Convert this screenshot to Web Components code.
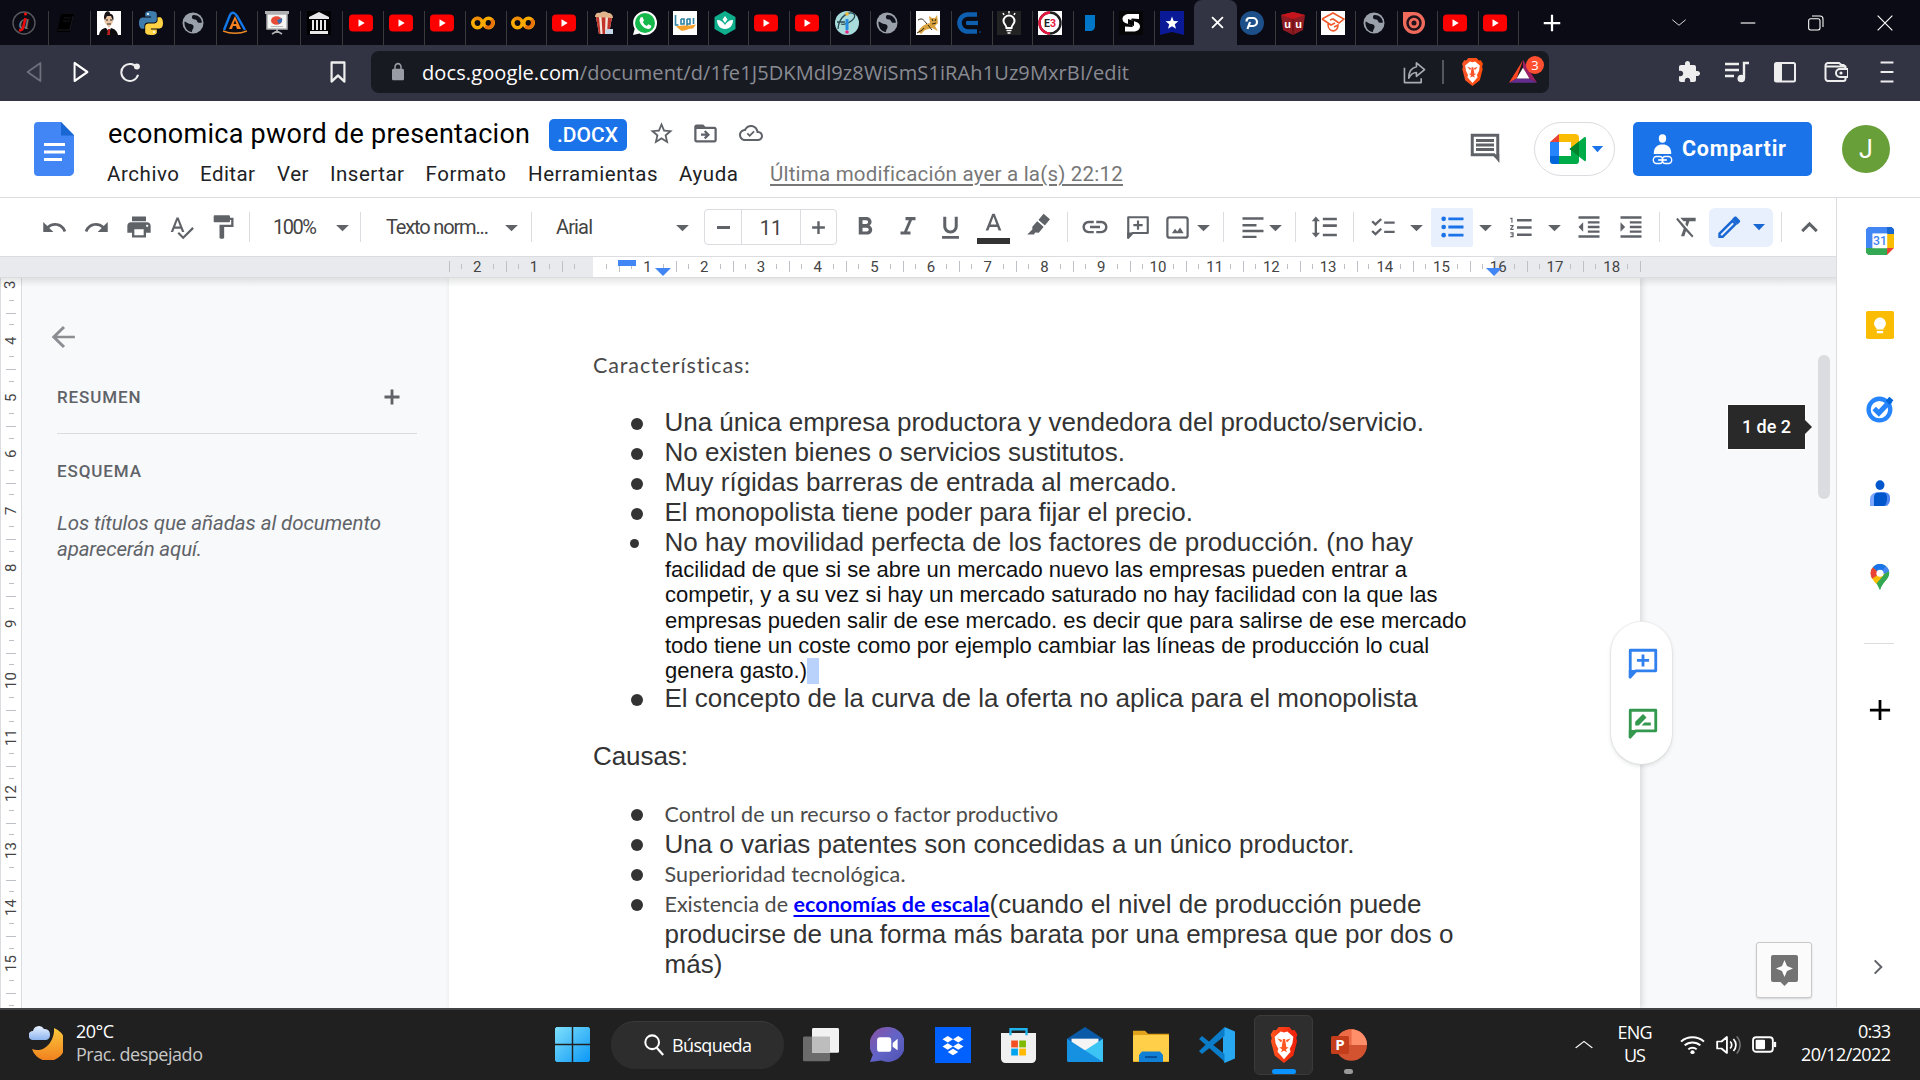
<!DOCTYPE html>
<html lang="es">
<head>
<meta charset="utf-8">
<title>economica pword de presentacion</title>
<style>
html,body{margin:0;width:1920px;height:1080px;overflow:hidden;background:#f8f9fa}
body{font-family:Roboto,"Liberation Sans",sans-serif}
</style>
</head>
<body>
<desktop-screen></desktop-screen>
<script>
const G='#5f6368';
const p=d=>`<path fill="currentColor" d="${d}"/>`;
const globe='<ellipse cx="12" cy="12" rx="10.500" ry="10.500" fill="#9aa0a9"/><path d="M3.500 10.500c2 0 3 2.500 5.500 2.500s4 1.500 3.500 3.500-1.500 2-1.500 4.500C6 20.500 3 16 3.500 10.500zM12 4c-1.500 1.500-1.500 3 0 4s3.500 0 4 2 2.500 2 5 1.500C20.500 7 17 3.500 12 4z" fill="#10121b"/>';
const yt='<rect y="3.5" width="24" height="17" rx="4" fill="#f00"/><path d="M9.500 8.300v7.400l6.200-3.700z" fill="#fff"/>';
const colab='<circle cx="6.500" cy="12" r="4.700" fill="none" stroke="#f9ab00" stroke-width="3.600"/><circle cx="17.500" cy="12" r="4.700" fill="none" stroke="#f9ab00" stroke-width="3.600"/><path d="M14.200 15.300a4.700 4.700 0 006.600-6.600" fill="none" stroke="#e8710a" stroke-width="3.600"/><path d="M3.200 8.700a4.700 4.700 0 016.600 0" fill="none" stroke="#e8710a" stroke-width="3.600" opacity=".55"/>';
const lion=(c,c2)=>`<defs><linearGradient id="l" x2="1"><stop stop-color="${c}"/><stop offset="1" stop-color="${c2}"/></linearGradient></defs><path fill="url(#l)" d="M8 0h8l2 2.200 2-.2 2 3-.8 2.500.6 2-2.800 9.500L12 24l-7-5L2.200 9.500l.6-2L2 5l2-3 2 .2z"/><path fill="#fff" d="M12 3.600l2.500-.6L19 6.500l-.7 4.500-2 3.500.6 2L12 21.500 7.100 16.500l.6-2-2-3.500L5 6.500 9.500 3z"/><path fill="${c}" d="M7 7.600l3.600 1-.8 1.800zM17 7.600l-3.600 1 .8 1.800zM11.200 8h1.600l1 5.500h1.700l-2.200 1.600 1.200 1.700-2.500-1-2.500 1 1.200-1.700-2.200-1.600h1.700z"/>`;
const ICONS={
 at:'<circle cx="12" cy="12" r="11" fill="none" stroke="#58585c" stroke-width="1.400"/><text x="12" y="18" text-anchor="middle" font-size="22" font-family="Liberation Serif" font-style="italic" fill="#77777a">a</text><path d="M13.500 7l-2.500 10c-.5 2-2 2.500-4 2" stroke="#f00b0b" stroke-width="2.600" fill="none"/><circle cx="13.500" cy="3" r="1.600" fill="#f00b0b"/>',
 book:'<path d="M6 3h13l-4 18H2z" fill="#000"/><path d="M9 7h7M8 10h7" stroke="#17171d"/><path d="M3 19h12l3-14" stroke="#1a1a20" fill="none"/>',
 man:'<rect width="24" height="24" fill="#fff"/><path d="M7 8c0-5 3-6 5-6l3 3 1 6-4 6-4-5z" fill="#e9c4a5"/><path d="M7 7c0-5 3-8 5.500-6l1 2c3 0 3.500 4 2.500 7l-2-5-4 0-2 4z" fill="#1b1416"/><path d="M9 9h2m2 0h2M10 13h4" stroke="#222"/><path d="M2 24c1-6 5-7 7-7l3 4 2-4c4 1 6 3 7 7z" fill="#0c0c0e"/><path d="M11 18h2v6h-3z" fill="#b51f22"/>',
 python:'<path fill="#3f7cac" d="M11.900 0C6 0 6.200 2.600 6.200 2.600v3h5.900v.9H3.800S0 6 0 12s3.400 5.800 3.400 5.800h2V15s-.1-3.400 3.400-3.400h5.700s3.300 0 3.300-3.200V3.200S18.300 0 11.900 0z"/><path fill="#ffd343" d="M12.100 24c5.900 0 5.700-2.600 5.700-2.600v-3h-5.900v-.9h8.300S24 18 24 12s-3.400-5.800-3.400-5.800h-2V9s.1 3.400-3.400 3.400H9.500s-3.300 0-3.300 3.200v5.200S5.700 24 12.100 24z"/><circle cx="9" cy="3" r="1.100" fill="#fff"/><circle cx="15" cy="21" r="1.100" fill="#fff"/>',
 globe, yt, colab,
 ark:'<path d="M1 19L7 4c2-4 5-2 7 1l8 14" fill="none" stroke="#1578e8" stroke-width="2.400"/><path d="M6 18L12 5l6 13h-4l-1-3h-3l-1 3z" fill="#f5821f"/><path d="M12 9l1.500 4h-3z" fill="#0b0b14"/><path d="M0 20c7 3 17 3 24 0" fill="none" stroke="#f08a24" stroke-width="1.600"/>',
 board:'<path d="M2 3h20v15H2z" fill="#f5f5f4" stroke="#aeb0b2" stroke-width="1.500"/><rect y="0" width="24" height="3" fill="#aeb0b2"/><ellipse cx="11.500" cy="9.500" rx="5.500" ry="4.300" fill="#e64b35"/><path d="M12 9l5-2a5 5 0 01-3 6z" fill="#3b6fb5"/><path d="M6 15.500h12" stroke="#bbb"/><path d="M12 18v4M7 23l5-3 5 3" stroke="#aeb0b2" stroke-width="1.700" fill="none"/>',
 bank:'<rect width="24" height="24" fill="#000"/><path d="M12 1L2 6v2h20V6zM3 20h18v3H3zM5 9h2v10H5zM9 9h2v10H9zM13 9h2v10h-2zM17 9h2v10h-2z" fill="#e8e8e8"/>',
 corn:'<path d="M4 6h16l-3 17H7z" fill="#f3e6dc"/><path d="M4 6h3l1.500 17H7zM9.500 6h4l-.5 17h-2.500zM16 6h4l-3 17h-2z" fill="#c3352b"/><path d="M3 6c0-4 3-5 5-4 2-2 6-2 8 0 3 0 5 2 5 5z" fill="#e2b58d"/><path d="M14 18h7v5h-8z" fill="#c3d7e8"/>',
 whats:'<path d="M12 0a12 12 0 110 24c-2 0-4-.5-5.500-1.500L0 24l1.700-6A12 12 0 0112 0z" fill="#fff"/><circle cx="12" cy="12" r="10" fill="#14b84b"/><path d="M7.500 6.500l2-.5 1.500 3.500-1.200 1.500c1 2 2 3 4 4l1.500-1.700 3 1.500c.3 2-1.500 3.300-3.300 3.100C11 17.500 6.500 13 6.500 9z" fill="#fff"/>',
 logro:'<rect width="24" height="24" fill="#fff"/><path d="M2.500 4v10h3M8 8v5h3V8H8m6 0v8m0-8h3v5h-3M20.500 7v6" stroke="#2d83a5" stroke-width="1.600" fill="none"/><path d="M3 15.500c6-2 11 0 20-2l-3 4c-6 0-9 3.500-12 2z" fill="#f5a12c"/>',
 teal:'<path d="M12 0l10.500 6v12L12 24 1.500 18V6z" fill="#0fae8d"/><path d="M12 5l2.500 3.500L12 12 9.500 8.500zM4 9c4 0 6 2 8 5 2-3 4-5 8-5 0 5-3 9-8 9S4 14 4 9z" fill="#fff"/>',
 info:'<circle cx="12" cy="12" r="12" fill="#a8dcdc"/><path d="M3 18C4 4 15 0 19 3c3 4-7 12-13 10M2 11h8" fill="none" stroke="#294950" stroke-width="1.300"/><path d="M10.500 8h3v11h-3z" fill="#248ce0"/><circle cx="12" cy="3" r="1.800" fill="#f2b632"/><circle cx="12" cy="21" r="1.800" fill="#e3268a"/>',
 tomcat:'<rect width="24" height="24" fill="#fff"/><path d="M2 21c3-6 7-8 12-9l-1-7 3 2h3l2-3 1 8-3 3 3 5-6-3-7 2-4 4z" fill="#d9a23c"/><path d="M2 9c5-3 6 1 9 4M1 22c3-2 5-2 7-5M16 8l1 2M20 8l-1 2M16 13l4-1M12 14l4 5" stroke="#332715" fill="none"/>',
 ce:'<path d="M20 3.500h-9a8 8 0 000 17h9M21 12H9" fill="none" stroke="#0e5fb0" stroke-width="4.600"/><path d="M20 9h-9a3 3 0 000 6h9" stroke="#0b0b14" stroke-width="1.400" fill="none"/><circle cx="23" cy="21" r=".8" fill="#0e5fb0"/>',
 bulb:'<rect width="24" height="24" fill="#222"/><path d="M9.500 17c0-3-3-4-3-7a5.500 5.500 0 0111 0c0 3-3 4-3 7z" fill="none" stroke="#fff" stroke-width="2"/><path d="M9.500 19.500h5M10.500 22h3M12 0v2.500M6 2l1 2M18 2l-1 2" stroke="#fff" stroke-width="1.500"/>',
 e3:'<rect width="24" height="24" fill="#fff"/><circle cx="12" cy="12" r="10.500" fill="none" stroke="#1e1e1e" stroke-width="2.400"/><path d="M12 1.500a10.500 10.500 0 000 21" fill="none" stroke="#e4153f" stroke-width="2.400"/><text x="6" y="16" font-size="10.500" font-weight="700" font-family="Roboto" fill="#222">E<tspan fill="#e4153f">3</tspan></text>',
 blue:'<path d="M7 4h10v11c0 3-2 5-5 5H7z" fill="#0076c9"/>',
 s:'<rect width="24" height="24" fill="#060606"/><path d="M20 3v5l-7-.5c-1 0-1 1.500 0 2 4 1.500 8 2 8 6 0 3-3 5-7 5H6v-5l7 .5c1 0 1-1.500 0-2C8 12.500 3.500 12 3.500 8c0-3 3-5 7-5z" fill="#fff"/><path d="M9 8v5l6 2v-5z" fill="#060606"/>',
 star:'<path d="M0 0h24v24l-12-3-12 3z" fill="#0a1a97"/><path d="M12 5.500l1.700 4.400 4.700.3-3.600 3 1.200 4.600-4-2.600-4 2.600 1.200-4.600-3.600-3 4.700-.3z" fill="#fff"/>',
 pp:'<circle cx="12" cy="12" r="12" fill="#1d4f89"/><path d="M7.500 18l2.500-7M9 15h4a4 4 0 000-8H9.500c-2 0-3 1.500-3 3.500" fill="none" stroke="#fff" stroke-width="2.200"/>',
 cube:'<path d="M12 1l12 3-2 15-10 5L2 19 0 4z" fill="#8d1b21"/><path d="M0 4l12-3 12 3-12 4z" fill="#c6151c"/><path d="M12 8v16" stroke="#5e0c12" stroke-width="1"/><text x="6.500" y="17" text-anchor="middle" font-size="11" font-weight="700" font-family="Liberation Sans" fill="#fff">u</text><text x="17.500" y="17" text-anchor="middle" font-size="11" font-weight="700" font-family="Liberation Sans" fill="#fff">u</text>',
 cap:'<rect width="24" height="24" fill="#fff"/><path d="M1 8l11-6 11 6-5 4-6-4-3 1M1 8l9 6 4-2M7 13c0 9 10 9 10 1l-4 2" fill="none" stroke="#ee5a2b" stroke-width="1.600"/>',
 spiral:'<path d="M1 1h11a11 11 0 11-11 11z" fill="#f16b5c"/><circle cx="12" cy="12" r="6.500" fill="none" stroke="#20131a" stroke-width="2.500"/><circle cx="12" cy="12" r="2.500" fill="#20131a"/>',
 /* browser controls */
 back:'<path d="M19 3v18L5 12z" fill="none" stroke="#6d6f7b" stroke-width="2" stroke-linejoin="round"/>',
 fwd:'<path d="M5 3v18l14-9z" fill="none" stroke="#fff" stroke-width="2.200" stroke-linejoin="round"/>',
 reload:'<path d="M20 8a9.300 9.300 0 10.800 7" fill="none" stroke="#eee" stroke-width="2.200"/><circle cx="19.500" cy="6" r="3.300" fill="#eee"/>',
 mark:'<path d="M5 2.500h14v19l-7-6-7 6z" fill="none" stroke="#eee" stroke-width="2.400" stroke-linejoin="round"/>',
 lock:p('M18 8h-1V6c0-2.760-2.240-5-5-5S7 3.240 7 6v2H6c-1.100 0-2 .9-2 2v10c0 1.100.9 2 2 2h12c1.100 0 2-.9 2-2V10c0-1.100-.9-2-2-2zM9 6c0-1.660 1.340-3 3-3s3 1.340 3 3v2H9V6z'),
 share:'<path d="M1.500 7v15.500H19V18M14 2l8.500 7-8.500 7v-4c-4 0-6 2-8 6 0-7 3-11 8-12z" fill="none" stroke="#aaacb3" stroke-width="1.700" stroke-linejoin="round"/>',
 brave:lion('#fb542b','#ff4d0a'),
 brave2:lion('#ff5520','#f01e0a'),
 bat:'<path d="M12 1l5 9-5-2.500z" fill="#9e1f63"/><path d="M12 1L0 22l6.500-4z" fill="#ff4724"/><path d="M12 1v7l5.500 10L24 22z" fill="#9e1f63"/><path d="M0 22h24l-6.500-4h-11z" fill="#662d91"/><path d="M12 8l5.500 10h-11z" fill="#fff"/>',
 ext:p('M20.500 11H19V7c0-1.100-.9-2-2-2h-4V3.500C13 2.120 11.880 1 10.500 1S8 2.120 8 3.500V5H4c-1.100 0-1.990.9-1.990 2v3.800H3.500c1.490 0 2.700 1.210 2.700 2.700s-1.210 2.700-2.700 2.700H2V20c0 1.100.9 2 2 2h3.800v-1.500c0-1.490 1.210-2.700 2.700-2.700 1.490 0 2.700 1.210 2.700 2.700V22H17c1.100 0 2-.9 2-2v-4h1.500c1.380 0 2.500-1.120 2.500-2.500S21.880 11 20.500 11z'),
 music:'<path d="M0 4h14M0 10h14M0 16h9M19 18V3h5" stroke="#eee" stroke-width="2.400" fill="none"/><circle cx="16.300" cy="18.500" r="3.800" fill="#eee"/>',
 side:'<rect x="2" y="3" width="20" height="18.500" rx="1.500" fill="none" stroke="#eee" stroke-width="2"/><path d="M2 3h7v19H2z" fill="#eee"/>',
 wallet:'<path d="M21.500 8V6.500l-2-1.500h-2L15 3H4a2.500 2.500 0 00-2.500 2.500v13A2.500 2.500 0 004 21h15.500a2 2 0 002-2v-2M2 6.500h17.500a2 2 0 012 2" fill="none" stroke="#eee" stroke-width="2"/><path d="M24 9h-8a3.500 3.500 0 000 8h8z" fill="#323443" stroke="#eee" stroke-width="2"/><circle cx="17" cy="13" r="1.600" fill="#eee"/>',
 menu:'<path d="M5 2.500h14M5 12h14M5 21.500h14" stroke="#eee" stroke-width="2.200"/>',
 /* docs */
 starO:p('M22 9.240l-7.190-.62L12 2 9.190 8.630 2 9.240l5.460 4.730L5.820 21 12 17.270 18.180 21l-1.630-7.030L22 9.240zM12 15.400l-3.760 2.270 1-4.280-3.320-2.880 4.380-.38L12 6.100l1.710 4.040 4.380.38-3.320 2.880 1 4.280L12 15.400z'),
 folder:p('M20 6h-8l-2-2H4c-1.100 0-2 .9-2 2v12c0 1.100.9 2 2 2h16c1.100 0 2-.9 2-2V8c0-1.100-.9-2-2-2zm0 12H4V8h16v10z')+p('M12 9l4 4-4 4-1.400-1.400L12.200 14H8v-2h4.200l-1.600-1.600z'),
 cloud:p('M19.350 10.040C18.670 6.590 15.640 4 12 4 9.110 4 6.600 5.640 5.350 8.040 2.340 8.360 0 10.910 0 14c0 3.310 2.690 6 6 6h13c2.760 0 5-2.240 5-5 0-2.640-2.050-4.780-4.650-4.960zM19 18H6c-2.210 0-4-1.790-4-4 0-2.050 1.530-3.760 3.560-3.970l1.070-.11.5-.95C8.080 7.140 9.940 6 12 6c2.620 0 4.880 1.860 5.390 4.430l.3 1.500 1.530.11c1.560.1 2.780 1.410 2.780 2.960 0 1.650-1.350 3-3 3zm-8.300-4.500l-1.700-1.700-1.300 1.300 3 3 5-5-1.300-1.300z'),
 docs:'<path d="M3 0h24l13 13v36a5 5 0 01-4 5H4a4 4 0 01-4-4V4a4 4 0 014-4z" fill="#4285f4"/><path d="M27 0l13 13.500H27z" fill="#1967d2"/><path d="M10 22.500h21M10 30h21M10 37.500h18" stroke="#fff" stroke-width="3"/>',
 comment:'<path d="M3.500 3.500h17v15.500l-2.500-2.500h-14.500z" fill="none" stroke="#5f6368" stroke-width="2"/><path d="M6 7h12M6 10h12M6 13h12" stroke="#5f6368" stroke-width="1.900"/><path d="M18 17l3.500 5v-6z" fill="#5f6368"/>',
 meet:'<path d="M0 8L9 0v8z" fill="#ea4335"/><path d="M9 0h16a4 4 0 014 4v9l-8 5V8H9z" fill="#fbbc04"/><path d="M0 8h9v14H0z" fill="#2684fc"/><path d="M0 22h9v8H3a3 3 0 01-3-3z" fill="#0066da"/><path d="M9 22h12v-7l8 4v8a3 3 0 01-3 3H9z" fill="#00ac47"/><path d="M19.500 15L34.500 3c.8 0 1.500.2 1.500 1v22c0 1-1 1.500-1.500 1z" fill="#00ac47"/><path d="M19.500 15l9.500-7.500v15z" fill="#00832d"/>',
 person:'<circle cx="12" cy="4.500" r="4.200" fill="#fff"/><path d="M2 20c0-7 4-9.500 10-9.500S22 13 22 20z" fill="#fff"/><rect x="1.500" y="22.500" width="11" height="7" rx="3.500" fill="none" stroke="#fff" stroke-width="1.600"/><rect x="11.500" y="22.500" width="11" height="7" rx="3.500" fill="none" stroke="#fff" stroke-width="1.600"/><path d="M7 26h10" stroke="#fff" stroke-width="1.600"/>',
 undo:p('M12.500 8c-2.650 0-5.050.99-6.900 2.600L2 7v9h9l-3.620-3.620c1.390-1.160 3.160-1.880 5.120-1.880 3.540 0 6.550 2.310 7.600 5.500l2.370-.78C21.080 11.030 17.150 8 12.500 8z'),
 redo:p('M18.400 10.600C16.550 8.990 14.150 8 11.500 8c-4.650 0-8.580 3.030-9.960 7.220L3.900 16c1.050-3.190 4.050-5.500 7.600-5.500 1.950 0 3.730.72 5.120 1.880L13 16h9V7l-3.600 3.600z'),
 print:p('M19 8H5c-1.660 0-3 1.340-3 3v6h4v4h12v-4h4v-6c0-1.660-1.340-3-3-3zm-3 11H8v-5h8v5zm3-7c-.55 0-1-.45-1-1s.45-1 1-1 1 .45 1 1-.45 1-1 1zm-1-9H6v4h12V3z'),
 spell:p('M12.450 16h2.090L9.430 3H7.570L2.460 16h2.090l1.120-3h5.640l1.140 3zm-6.020-5L8.500 5.480 10.570 11H6.430zm15.160.59l-8.090 8.090L9.830 16l-1.410 1.410 5.090 5.090L23 13l-1.410-1.410z'),
 paint:p('M18 4V3c0-.55-.45-1-1-1H5c-.55 0-1 .45-1 1v4c0 .55.450 1 1 1h12c.55 0 1-.45 1-1V6h1v4H9v11c0 .55.450 1 1 1h2c.55 0 1-.45 1-1v-9h8V4h-3z'),
 bold:p('M15.600 10.790c.97-.67 1.650-1.770 1.650-2.790 0-2.260-1.750-4-4-4H7v14h7.040c2.090 0 3.710-1.700 3.710-3.790 0-1.520-.86-2.820-2.150-3.420zM10 6.500h3c.83 0 1.500.67 1.500 1.500s-.67 1.500-1.500 1.500h-3v-3zm3.500 9H10v-3h3.500c.83 0 1.500.67 1.500 1.500s-.67 1.500-1.500 1.500z'),
 italic:p('M10 4v2.500h2.700l-3.900 9H6V18h8v-2.500h-2.700l3.900-9H18V4z'),
 under:p('M12 17c3.310 0 6-2.690 6-6V3h-2.500v8c0 1.930-1.570 3.500-3.500 3.500S8.500 12.930 8.500 11V3H6v8c0 3.310 2.690 6 6 6zm-7 2v2.400h14V19H5z'),
 acolor:p('M11 3L5.500 17h2.250l1.120-3h6.250l1.120 3h2.250L13 3h-2zm-1.380 9L12 5.670 14.380 12H9.620z'),
 hilite:p('M16.500 1.500l5.700 5-4.600 5.500-5.700-5zM11 8l5.700 5-4.500 5.500-3.200-.3L8 20H2l4.500-4.500V13z')+'<path d="M11 7.300l6.300 5.600" stroke="#fff" stroke-width="1.300"/>',
 link:p('M3.900 12c0-1.710 1.390-3.100 3.100-3.100h4V7H7c-2.760 0-5 2.240-5 5s2.240 5 5 5h4v-1.900H7c-1.710 0-3.100-1.390-3.100-3.100zM8 13h8v-2H8v2zm9-6h-4v1.900h4c1.710 0 3.100 1.390 3.100 3.100s-1.390 3.100-3.100 3.100h-4V17h4c2.760 0 5-2.240 5-5s-2.240-5-5-5z'),
 addc:'<path d="M3 22V3h18v14.500H7z" fill="none" stroke="currentColor" stroke-width="2" stroke-linejoin="round"/><path d="M12 6v8.500M7.700 10.200h8.600" stroke="currentColor" stroke-width="2"/><path d="M2 22.500v-5.500h5.500z" fill="currentColor"/>',
 suggest:'<path d="M3 22V3h18v14.500H7z" fill="none" stroke="currentColor" stroke-width="2" stroke-linejoin="round"/><path d="M6.500 13.700v-2.500l5.500-5.500 2.500 2.500-5.500 5.500zM11 13.700l2-2H17.500v2z" fill="currentColor"/><path d="M2 22.500v-5.500h5.500z" fill="currentColor"/>',
 image:'<rect x="3" y="3" width="18" height="18" rx="2" fill="none" stroke="currentColor" stroke-width="2"/><path d="M7 17l2.800-4 2 2.500 2.500-3.500L17.500 17z" fill="currentColor"/>',
 align:p('M3 3h18v2.200H3zM3 9.300h12v2.200H3zM3 14.600h18v2.200H3zM3 20h12v2.200H3z'),
 spacing:p('M6 7h2.500L5 3 1.500 7H4v10H1.500L5 21l3.500-4H6V7zm5-3v2.300h12V4H11zm0 16h12v-2.300H11V20zm0-8h12v-2.300H11V12z'),
 check:p('M22 7h-9v2h9V7zm0 8.500h-9v2h9v-2zM5.540 11L2 7.460l1.410-1.410 2.120 2.120 4.240-4.240 1.410 1.410L5.540 11zm0 9L2 16.460l1.410-1.410 2.120 2.120 4.240-4.240 1.410 1.410L5.540 20z'),
 bullet:'<circle cx="4" cy="5" r="2" fill="currentColor"/><circle cx="4" cy="12" r="2" fill="currentColor"/><circle cx="4" cy="19" r="2" fill="currentColor"/>'+p('M8 3.800h13v2.400H8zM8 10.800h13v2.400H8zM8 17.800h13v2.400H8z'),
 number:p('M2 17h2v.5H3v1h1v.5H2v1h3v-4H2v1zm1-9h1V4H2v1h1v3zm-1 3h1.800L2 13.100v.9h3v-1H3.200L5 10.900V10H2v1zm6-6.100v2.200h13V4.900H8zm0 14.200h13v-2.200H8v2.200zm0-6h13v-2.200H8v2.200z'),
 outdent:p('M11 17h10v-2H11v2zm-8-5l4 4V8l-4 4zm0 9.200h18V19H3v2.200zM3 2.800v2.200h18V2.800H3zm8 6.200h10V7H11v2zm0 4h10v-2H11v2z'),
 indent:p('M3 21.200h18V19H3v2.200zM3 8v8l4-4-4-4zm8 9h10v-2H11v2zM3 2.800v2.200h18V2.800H3zm8 6.200h10V7H11v2zm0 4h10v-2H11v2z'),
 clear:p('M3.270 4L2 5.270l6.970 7.970L6.500 20h3l1.570-4.660L16.730 21 18 19.730zM6 4v.18L8.820 7h2.400l-.72 2.680 1.900 2.100L14.210 7H20V4H6z'),
 pencil:'<path d="M4 17.500L15.500 6l2.800 2.800L6.800 20.300H4z" fill="none" stroke="currentColor" stroke-width="2.200"/><path d="M15.200 4.500l2-2c.6-.5 1.200-.5 1.800 0l3 3c.5.6.5 1.200 0 1.800l-2 2z" fill="currentColor"/>',
 up:'<path d="M5 15.500l7-7 7 7" fill="none" stroke="currentColor" stroke-width="2.800"/>',
 arrowL:'<path d="M22 12H3M12 2l-9.500 10L12 22" fill="none" stroke="#8a8d91" stroke-width="2.700"/>',
 plus:'<path d="M12 3v18M3 12h18" stroke="currentColor" stroke-width="3.400"/>',
 plusThin:'<path d="M12 1v22M1 12h22" stroke="currentColor" stroke-width="3"/>',
 caret:'<path d="M3 7h18l-9 10.500z" fill="currentColor"/>',
 cal:'<path d="M2 0h16v6H6v12H0V2z" fill="#4285f4"/><path d="M18 0h4l2 2v4h-6z" fill="#1967d2"/><path d="M18 6h6v12h-6z" fill="#fbbc04"/><path d="M0 18h18v6H2l-2-2z" fill="#34a853"/><path d="M18 18h6l-6 6z" fill="#ea4335"/><rect x="5.500" y="5.500" width="12.700" height="12.700" fill="#fff"/><text x="12" y="15.700" text-anchor="middle" font-size="10.500" font-weight="500" font-family="Roboto" fill="#4285f4">31</text>',
 keep:'<rect width="24" height="24" rx="1.500" fill="#fbbc04"/><path d="M12 5.500a5.200 5.200 0 013 9.300v1.100H9v-1.100a5.200 5.200 0 013-9.300zM9.300 17.200h5.400v1.800H9.300z" fill="#fff"/>',
 tasks:'<circle cx="11.500" cy="12.500" r="9.300" fill="none" stroke="#2684fc" stroke-width="3.700"/><path d="M7 11.500l4 4L21 5" fill="none" stroke="#2684fc" stroke-width="4.300"/><path d="M17 5l3-3.500 3.500 3-3.500 4z" fill="#0066da"/>',
 contacts:'<circle cx="12" cy="4.700" r="4.500" fill="#0057cc"/><path d="M2 24v-6c0-4 3-6.500 7-6.500h8c4 0 5 3 5 6s-2 6.500-5 6.500z" fill="#7da7ff"/><path d="M12 11.500h5c4 0 5 3 5 6s-2 6.500-5 6.500h-5z" fill="#5086f2"/><path d="M6 24v-8c0-3 2-4.500 4-4.500h5c3 0 4 2 4 5s-1 7.500-4 7.500z" fill="#0057cc"/>',
 maps:'<path d="M12 0a8.500 8.500 0 018.500 8.500c0 6-6.500 8-8.500 15.500-2-7.500-8.500-9.500-8.500-15.500A8.500 8.500 0 0112 0z" fill="#34a853"/><path d="M3.700 10.500c.5 3 2.800 5 5 8L17 8z" fill="#fbbc04"/><path d="M5.500 3L12 8.500 4.800 13.500C2 9 3.500 5 5.500 3z" fill="#ea4335"/><path d="M5.500 3c3-3.800 8.500-4 12-1L12 9z" fill="#1a73e8"/><path d="M17.500 2c2 1.500 2.800 3.500 3 5.500L13 10l-2-1z" fill="#4285f4"/><path d="M9 18l10-11h1.500c0 7-6.500 9.500-8.500 17z" fill="#34a853"/><circle cx="12" cy="8.500" r="3.300" fill="#fff"/>',
 explore:'<path d="M2 0h23a2 2 0 012 2v23a2 2 0 01-2 2h-7.500L13.500 31l-4-4H2a2 2 0 01-2-2V2a2 2 0 012-2z" fill="#737373"/><path d="M13.500 5l2.500 6 6 2.500-6 2.500-2.500 6-2.500-6-6-2.500 6-2.500z" fill="#fff"/>',
 right:'<path d="M8 4l8 8-8 8" fill="none" stroke="#5f6368" stroke-width="2.400"/>',
 /* taskbar */
 moon:'<defs><linearGradient id="m" y2="1" x2="0"><stop stop-color="#fcc93b"/><stop offset="1" stop-color="#f07f1e"/></linearGradient><linearGradient id="c" y2="1" x2="0"><stop stop-color="#e9f1ff"/><stop offset="1" stop-color="#8db4ee"/></linearGradient></defs><path d="M25 2a17 17 0 11-22 21c12 5 23-8 22-21z" fill="url(#m)"/><path d="M4 14a4.500 4.500 0 010-9 6 6 0 0111-2c4 0 6 2 6 6 0 3-2 5-5 5z" fill="url(#c)"/>',
 win:'<defs><linearGradient id="w" x2="1" y2="1"><stop stop-color="#7fe0fc"/><stop offset="1" stop-color="#0a97f5"/></linearGradient></defs><path d="M1 0h10.500v11.500H0V1zM12.500 0H23l1 1v10.500H12.500zM0 12.500h11.500V24H1l-1-1zM12.500 12.500H24V23l-1 1H12.500z" fill="url(#w)"/>',
 search:'<circle cx="10" cy="9" r="7.500" fill="none" stroke="#fff" stroke-width="2.200"/><path d="M15 15l7 8" stroke="#fff" stroke-width="2.400"/>',
 tview:'<rect y="6" width="18" height="17.500" rx="1" fill="#6b6b6b"/><rect x="6" width="18" height="17.500" rx="1" fill="#f2f2f2"/><rect x="6" y="6" width="12" height="11.500" fill="#bdbdbd"/>',
 chat:'<defs><linearGradient id="h" x2="1" y2="1"><stop stop-color="#8a50a0"/><stop offset=".5" stop-color="#6264c7"/><stop offset="1" stop-color="#4f52b2"/></linearGradient></defs><path d="M12 0a12 12 0 11-4 23L0 24l2-5A12 12 0 0112 0z" fill="url(#h)"/><rect x="5" y="7" width="10" height="10" rx="2" fill="#fff"/><path d="M16 11l3.500-3v8L16 13.500z" fill="#fff"/>',
 dropbox:'<rect width="24" height="24" fill="#0061fe"/><path d="M8.500 6l3.500 2.200-3.500 2.200L5 8.200zM15.500 6L19 8.200l-3.500 2.200L12 8.200zM8.500 10.800L12 13l-3.500 2.200L5 13zM15.500 10.800L19 13l-3.500 2.200L12 13zM12 14.500l3.500 2.200-3.500 2.200-3.500-2.200z" fill="#fff"/>',
 store:'<path d="M0 4h24v17a3 3 0 01-3 3H3a3 3 0 01-3-3z" fill="#f0f0f0"/><path d="M6.500 5.500V1.500h11v4" fill="none" stroke="#1eb4ee" stroke-width="1.600"/><path d="M7 9h4.600v4.600H7z" fill="#f25022"/><path d="M12.500 9h4.600v4.600h-4.600z" fill="#7fba00"/><path d="M7 14.400h4.600V19H7z" fill="#00a4ef"/><path d="M12.500 14.400h4.600V19h-4.600z" fill="#ffb900"/>',
 mail:'<path d="M0 8l12-8 12 8v4H0z" fill="#0a5aa8"/><path d="M3 8h18v8H3z" fill="#f4f4f4"/><path d="M24 8v16H0z" fill="#3cc4f5"/><path d="M0 8l24 16H1l-1-1z" fill="#1690e0"/>',
 files:'<path d="M0 2h8l2 2h14v20H0z" fill="#e0a21b"/><rect y="5" width="24" height="18.500" rx="1" fill="#ffcf4a"/><path d="M4 24v-5l2-2.500h12l2 2.500v5z" fill="#1080d6"/><path d="M8 20.500h8" stroke="#07509b" stroke-width="1.500"/>',
 code:'<path d="M17 0l7 3v18l-7 3-1-3V4z" fill="#29a8f2"/><path d="M2 6l15 12v5L0 8zM0 16L17 0v6L2 18z" fill="#0a7cc8"/>',
 ppt:'<circle cx="13.500" cy="12" r="10.500" fill="#d35230"/><path d="M13.500 1.500A10.500 10.500 0 0124 12H13.500z" fill="#ff8f6b"/><path d="M3 12a10.500 10.500 0 0110.500-10.500V12z" fill="#ed6c47"/><rect y="6" width="12" height="12" rx="1" fill="#c43e1c"/><text x="6" y="15.500" text-anchor="middle" font-size="10" font-weight="700" font-family="Open Sans" fill="#fff">P</text>',
 wifi:'<path d="M1 9a15.500 15.500 0 0122 0M4.500 13a10.700 10.700 0 0115 0M8 17a5.700 5.700 0 018 0" fill="none" stroke="#fff" stroke-width="1.900"/><circle cx="12" cy="20" r="2" fill="#fff"/>',
 vol:'<path d="M2 8.500h4L11 4v16l-5-4.500H2z" fill="none" stroke="#fff" stroke-width="1.700" stroke-linejoin="round"/><path d="M14 8.500a5 5 0 010 7M17 6a9 9 0 010 12" fill="none" stroke="#fff" stroke-width="1.600"/><path d="M20 3.500a13 13 0 010 17" fill="none" stroke="#777" stroke-width="1.400"/>',
 batt:'<rect x="1" y="5" width="19" height="14" rx="3" fill="none" stroke="#fff" stroke-width="1.800"/><rect x="3.500" y="7.500" width="9" height="9" rx="1" fill="#fff"/><path d="M22 9.500v5" stroke="#fff" stroke-width="2.400"/>',
 chevU:'<path d="M2 17L12 6l10 11" fill="none" stroke="#fff" stroke-width="1.600"/>',
 chevD:'<path d="M2 6l10 12L22 6" fill="none" stroke="#fff" stroke-width="1.500"/>',
 min:'<path d="M1 12h22" stroke="#fff" stroke-width="1.700"/>',
 max:'<rect x="1" y="5.500" width="17" height="17" rx="3" fill="none" stroke="#fff" stroke-width="1.600"/><path d="M6 1.500h12a4.500 4.500 0 014.500 4.500v12" fill="none" stroke="#fff" stroke-width="1.600"/>',
 x:'<path d="M1 1l22 22M23 1L1 23" stroke="#fff" stroke-width="1.700"/>',
 xb:'<path d="M2 2l20 20M22 2L2 22" stroke="#fff" stroke-width="3.400"/>'
};
const BOX={docs:'0 0 40 54',meet:'0 0 36 30',person:'0 0 24 31',explore:'0 0 27 31',moon:'0 0 34 34'};
const ic=(n,w=27,h=w,c=G)=>`<ui-icon name="${n}" w="${w}" h="${h}" style="color:${c}"></ui-icon>`;
const tx=(s,w,st='')=>`<ui-text w="${w}" style="${st}">${s}</ui-text>`;
/* Lays out a flex row: each entry is [left edge, width, markup, extra style]. */
const flow=(items,start=0)=>{let e=start;return items.map(([x,w,h,s=''])=>{const m=x-e;e=x+w;return `<div class="c" style="margin-left:${m.toFixed(2)}px;width:${w}px;${s}">${h}</div>`}).join('')};
const mid=(c,n,w=27,h=w,col=G,s='')=>[c-w/2,w,ic(n,w,h,col),s];
const ROW='.c{flex:none;display:flex;align-items:center}.row{display:flex;align-items:center}';
const def=(name,html)=>customElements.define(name,class extends HTMLElement{
  constructor(){super();this.attachShadow({mode:'open'}).innerHTML='<style>:host{display:block;box-sizing:border-box}*{box-sizing:border-box}'+ROW+'</style>'+(typeof html==='function'?html(this):html)}
});

customElements.define('ui-icon',class extends HTMLElement{
  constructor(){super();this.attachShadow({mode:'open'})}
  connectedCallback(){const n=this.getAttribute('name'),w=this.getAttribute('w'),h=this.getAttribute('h');
   this.shadowRoot.innerHTML=`<style>:host{display:block;flex:none;line-height:0}svg{display:block}</style><svg width="${w}" height="${h}" viewBox="${BOX[n]||'0 0 24 24'}" preserveAspectRatio="none">${ICONS[n]}</svg>`}
});

const tabs=[['at',49],['book',90.6],['man',132.6],['python',174.7],['globe',216.7],['ark',258.500],['board',301],['bank',343],['yt',384.500],['yt',425],['yt',466],['colab',507],['colab',547],['yt',588],['corn',628],['whats',668.600],['logro',708.600],['teal',749],['yt',790],['yt',830.6],['info',870.6],['globe',911],['tomcat',952],['ce',992.6],['bulb',1033],['e3',1074],['blue',1114],['s',1154.7],['star',1194],['',1237],['pp',1276],['cube',1316.7],['cap',1356.500],['globe',1398],['spiral',1438],['yt',1479],['yt',1519]];
def('browser-tabs',()=>{let e=0;return `<style>:host{height:45px;background:#0b0b15;display:flex}
.t{height:34px;margin-top:11px;border-right:1.500px solid #3a3a3c;display:flex;justify-content:flex-end;padding-right:10.500px;flex:none}
.t:first-of-type{padding-right:12px}.t.n{border-color:transparent;padding-right:8.500px}.a{background:#323443;border-radius:8px 8px 0 0;height:45px;flex:none;display:flex;align-items:center;justify-content:center;padding-left:4px}.r{display:flex;height:45px;align-items:center}</style>`+
 tabs.map(([n,x],i)=>{const w=x-e;e=x;return n?`<div class="t ${n=='star'?'n':''}" style="width:${w.toFixed(1)}px">${ic(n,24)}</div>`:`<div class="a" style="width:${w}px">${ic('xb',13)}</div>`}).join('')+
 `<div class="r">${flow([mid(1552,'plusThin',18,18,'#fff'),mid(1679.500,'chevD',16,11),mid(1748,'min',16),mid(1816.500,'max',16),mid(1885.500,'x',16)],1519)}</div>`});

def('address-bar',`<style>:host{height:56px;background:#323443;display:flex;align-items:center;padding-bottom:2px}
.n{background:#ff4f30;color:#fff;font:13px "Open Sans",sans-serif;width:18px;height:18px;border-radius:9px;display:flex;align-items:center;justify-content:center;position:absolute;left:17px;top:-3px}.b{position:relative}</style>
${flow([mid(33.500,'back',22,24),mid(81,'fwd',22,24),mid(129.500,'reload',22,22),mid(337.500,'mark',22,24),
[371,1178,flow([mid(398,'lock',18,20,'#9a9ca5'),[422,707,tx('docs.google.com<span style="color:#898b92">/document/d/1fe1J5DKMdl9z8WiSmS1iRAh1Uz9MxrBI/edit</span>',707,'font:20px Open Sans,sans-serif;color:#fff')],mid(1414,'share',23),[1442,2,'','height:24px;background:#54565e'],mid(1472,'brave',25,28),[1509,28,`<div class="b">${ic('bat',28,26)}<span class="n">3</span></div>`]],371),'height:42px;background:#181a22;border-radius:8px'],
mid(1689,'ext',24,24,'#eee'),mid(1736.500,'music',24,24),mid(1785,'side',24,24),mid(1836,'wallet',24,24),mid(1887,'menu',22,24)])}`);

const menus=[['Archivo',107,72],['Editar',200,55],['Ver',277,31.500],['Insertar',330,74],['Formato',425.500,80.500],['Herramientas',528,129.500],['Ayuda',679,59]];
const UL='text-decoration:underline;text-decoration-thickness:2px;text-underline-offset:3px';
def('docs-header',`<style>:host{height:97px;background:#fff;border-bottom:1px solid #dadce0;display:flex;color:#000}
.logo{padding:21px 0 0 34px}.mid{width:1340px;padding-top:18px}.line{height:32px;display:flex;align-items:center}.menu{height:30px;margin-top:8px;display:flex;align-items:center;font-size:20.500px;color:#202124}
.right{display:flex;align-items:center;height:96px;}</style>
<div class="logo">${ic('docs',40,54)}</div>
<div class="mid"><div class="line">${flow([[108,422,tx('economica pword de presentacion',422,'font-size:27px'),'padding-bottom:2px'],[549,78,tx('.DOCX',61,'font-size:21px;font-weight:500;color:#fff'),'height:32px;background:#1a73e8;border-radius:5px;padding-left:8px'],mid(661,'starO',27,27,G,'padding-bottom:4px'),mid(705.500,'folder',27,27,G,'padding-bottom:4px'),mid(751,'cloud',24,24,G,'padding-bottom:4px')],74)}</div>
<div class="menu">${flow([...menus.map(([t,x,w])=>[x,w,tx(t,w)]),[770,352,tx(`<span style="${UL}">Última modificación ayer a la(s) 22:12</span>`,352,'color:#777')]],74)}</div></div>
<div class="right">${flow([mid(1485,'comment',36,36,G,'padding-bottom:2px'),[1534,81,ic('meet',36,30)+`<div style="width:4px"></div>`+ic('caret',15,14,'#1a73e8'),'height:54px;border:1.500px solid #dadce0;border-radius:27px;padding-left:15px'],
[1633,179,ic('person',21,31,'#fff')+tx('Compartir',104,'font-size:21.500px;font-weight:700;color:#fff;margin:0 0 2px 9px'),'height:54px;border-radius:5px;background:#1a73e8;padding-left:19px'],
[1842,48,'J','height:48px;border-radius:24px;background:#689f38;color:#fff;justify-content:center;font-size:25px']],1414)}</div>`);

const sep=x=>[x,1,'','height:30px;background:#dadce0'];
const car=(x,c=G)=>mid(x,'caret',17,14,c,'padding-top:2px');
def('format-toolbar',`<style>:host{height:59px;width:1836px;background:#fff;border-bottom:1px solid #dadce0;display:flex;align-items:center;font-size:20px;color:#444}
.box{display:flex;height:36px;width:133px;border:1px solid #dadce0;border-radius:4px}.box>*{display:flex;align-items:center;justify-content:center}.m{width:60px;border:solid #dadce0;border-width:0 1px;padding-top:2px}</style>
${flow([mid(54,'undo'),mid(96.500,'redo'),mid(138.500,'print',28),mid(181,'spell'),mid(223,'paint',28,28),sep(249),[273,44,tx('100%',44)],car(342),sep(360),[386,103,tx('Texto norm...',103)],car(511),sep(531),[556,37,tx('Arial',37)],car(682),
[704,133,`<div class="box"><div style="width:36px"><div style="width:13px;height:3px;background:${G}"></div></div><div class="m">11</div><div style="flex:1">${ic('plus',17)}</div></div>`],
mid(865,'bold',30,30),mid(908,'italic',30,30),mid(950,'under',29,29),[977,33,`<div style="display:flex;flex-direction:column;align-items:center;width:33px">${ic('acolor',29,29)}<div style="width:33px;height:6px;background:#333;margin-top:-1px"></div></div>`],mid(1038,'hilite',27,27,G,'padding-bottom:3px'),sep(1067),mid(1095,'link',30),mid(1137.500,'addc',26),mid(1177.500,'image',27),car(1203),sep(1223),mid(1252.500,'align',28,26),car(1275.500),sep(1295),mid(1324,'spacing',28),sep(1353),mid(1383,'check',28,26),car(1416),
[1431,42,ic('bullet',28,28,'#1a73e8'),'height:39px;background:#e8f0fe;padding-left:8px;border-radius:2px'],car(1485),mid(1521,'number',27,29),car(1554),mid(1588.500,'outdent',28),mid(1630.500,'indent',28),sep(1659),mid(1687,'clear',26,28),
[1709,64,ic('pencil',27,27,'#1967d2')+'<div style="width:9px"></div>'+ic('caret',16,14,'#1967d2'),'height:39px;background:#e8f0fe;padding-left:6px;border-radius:6px'],sep(1781),mid(1809.500,'up',25)])}`);

const cellTicks=v=>`<i class="M"></i><i class="q"></i><b>${v}</b><i class="q"></i>`;
def('top-ruler',`<style>:host{height:21px;width:1836px;border-bottom:1px solid #dadce0;background:linear-gradient(#fff,#fff) 593px 0/901px 100% no-repeat #e8eaed;padding-left:449px;display:flex;position:relative}
.k{width:56.720px;flex:none;display:flex;align-items:center;justify-content:space-between;padding-bottom:1px;height:20px}i{width:1px;background:#bdc1c6}.M{height:11px}.q{height:5px}b{font:15px Roboto;color:#444;width:17px;display:flex;justify-content:center}
.k .q:last-child{margin-right:12px}.k .M{margin-right:4px}.ov{position:absolute}</style>
${[2,1,'',...Array.from({length:18},(_,i)=>i+1)].map(v=>`<div class="k">${cellTicks(v)}</div>`).join('')}<i style="height:11px;margin-top:4px"></i>
<div class="ov" style="left:618px;top:3px;width:18px;height:6px;background:#4285f4"></div>
<div class="ov" style="left:655px;top:11px;border:8px solid transparent;border-top:8px solid #4285f4;border-bottom:0"></div>
<div class="ov" style="left:1486px;top:11px;border:8px solid transparent;border-top:8px solid #4285f4;border-bottom:0"></div>`);

def('side-ruler',`<style>:host{width:22px;height:730px;overflow:hidden;background:#fff;border:solid #dadce0;border-width:0 1.500px 0 1px;flex:none}
.w{margin-top:-22px}.k{height:56.690px;display:flex;flex-direction:column;align-items:center;justify-content:space-between}i{height:1px;background:#bdc1c6}.M{width:10px}.q{width:5px}b{font:15px Roboto;color:#444;height:18px;line-height:20px;writing-mode:vertical-rl;transform:rotate(180deg);display:flex;justify-content:center;width:20px}
.k .q:last-child{margin-bottom:12px}.k .M{margin-bottom:4px}.k:first-child b{height:12px;line-height:18px}</style><div class="w">${Array.from({length:14},(_,i)=>`<div class="k">${cellTicks(i<13?i+3:'')}</div>`).join('')}</div>`);

def('outline-panel',`<style>:host{width:427px;flex:none;padding:47px 0 0 35px;color:#5f6368;font-weight:500;font-size:17px}
.h{display:flex;height:24px;align-items:center}.em{font:italic 400 20.500px/26px Roboto;margin-top:27px}.em ui-text{line-height:26px}</style>
<div style="margin-left:-6px">${ic('arrowL',26,24)}</div>
<div class="h" style="margin-top:36px">${tx('RESUMEN',83.500)}<div style="width:241px"></div>${ic('plus',20)}</div>
<div style="width:360px;height:1px;background:#dadce0;margin-top:24px"></div>
<div class="h" style="margin-top:25px">${tx('ESQUEMA',84)}</div>
<div class="em">${tx('Los títulos que añadas al documento',324)}${tx('aparecerán aquí.',145)}</div>`);

const L='font-family:Lato,sans-serif;font-size:21.500px';
const LT=L+';font-weight:400;color:#4a4a4a;position:relative;top:.5px';
const li=(t,w,small)=>`<doc-line class="b" ${small?'dot="9"':'dot="12"'}>${tx(t,w)}</doc-line>`;
const sm=(t,w)=>`<div class="s">${tx(t,w)}</div>`;
customElements.define('doc-line',class extends HTMLElement{
 constructor(){super();const d=this.getAttribute('dot')||0;
 this.attachShadow({mode:'open'}).innerHTML=`<style>:host{display:flex;height:30px}.d{width:${d}px;height:${d}px;border-radius:50%;background:#333;margin:${16.500-d/2}px ${d==9?25.500:22}px 0 ${d==9?37:37.500}px;flex:none}</style><div class="d"></div><slot></slot>`}
});
def('doc-page',`<style>:host{width:1191px;height:730px;flex:none;background:#fff;padding:71px 0 0 144px;box-shadow:2px 0 6px rgba(60,64,67,.18);font:26px/30px "Liberation Sans",sans-serif;color:#333}
.s{font-size:22px;line-height:25.300px;height:25.300px;color:#111;margin-left:72px;display:flex}.sel{width:12px;height:26px;background:#b9d2fb}</style>
<div style="height:30px">${tx('Características:',157,LT)}</div>
<div style="height:28px"></div>
${li('Una única empresa productora y vendedora del producto/servicio.',759.500)}${li('No existen bienes o servicios sustitutos.',460.500)}${li('Muy rígidas barreras de entrada al mercado.',512.500)}${li('El monopolista tiene poder para fijar el precio.',528.500)}${li('No hay movilidad perfecta de los factores de producción. (no hay',748.500,1)}
${sm('facilidad de que si se abre un mercado nuevo las empresas pueden entrar a',742)}${sm('competir, y a su vez si hay un mercado saturado no hay facilidad con la que las',772.500)}${sm('empresas pueden salir de ese mercado. es decir que para salirse de ese mercado',801.500)}${sm('todo tiene un coste como por ejemplo cambiar las líneas de producción lo cual',764)}<div class="s">${tx('genera gasto.)',142)}<div class="sel"></div></div>
${li('El concepto de la curva de la oferta no aplica para el monopolista',753)}
<div style="height:27.500px"></div>${tx('Causas:',95,'line-height:30px')}<div style="height:28px"></div>
<doc-line dot="12">${tx('Control de un recurso o factor productivo',394,LT)}</doc-line>
${li('Una o varias patentes son concedidas a un único productor.',690)}
<doc-line dot="12">${tx('Superioridad tecnológica.',241,LT)}</doc-line>
<doc-line dot="12">${tx('Existencia de',123.500,LT)}${tx(`<span style="${UL}">economías de escala</span>`,196,L+';font-weight:700;color:#00f;margin-left:5.500px;position:relative;top:.5px')}${tx('(cuando el nivel de producción puede',432)}</doc-line>
<div style="margin-left:71.500px">${tx('producirse de una forma más barata por una empresa que por dos o',789)}${tx('más)',58)}</div>`);

def('page-margin',`<style>:host{flex:1;height:730px;position:relative}.o{position:absolute}
.tip{left:88px;top:127px;width:77px;height:44px;background:#292929;outline:1px solid #fff;color:#fff;font:500 18px Roboto;display:flex;align-items:center;justify-content:center;padding-bottom:1px}
.ar{left:165px;top:142px;border:7px solid transparent;border-left-color:#292929;border-right:0}
.bar{left:178px;top:77px;width:12px;height:144px;border-radius:6px;background:#dadce0}
.pill{left:-29.500px;top:343.500px;width:61px;height:142px;border-radius:31px;background:#fff;box-shadow:0 2px 4px rgba(60,64,67,.15),0 0 1px 1px #eff0f0;display:flex;flex-direction:column;align-items:center;padding:24px 0 0 4px;gap:26px}
.ex{left:116px;top:664px;width:56px;height:56px;background:#fbfbfb;border:1px solid #c9c9c9;border-radius:3px;box-shadow:0 1px 2px rgba(0,0,0,.15);display:flex;align-items:center;justify-content:center}</style>
<div class="o bar"></div><div class="o tip">${tx('1 de 2',49)}</div><div class="o ar"></div>
<div class="o pill">${ic('addc',34,34,'#3081ee')}${ic('suggest',34,34,'#34994f')}</div>
<div class="o ex">${ic('explore',27,31)}</div>`);

def('side-panel',`<style>:host{width:84px;height:809px;background:#fff;border-left:1px solid #dadce0;display:flex;flex-direction:column;align-items:center;padding:29px 0 0 3px}
:host>*{flex:none}</style>${ic('cal',28,28)}<div style="height:56px"></div>${ic('keep',28)}<div style="height:56px"></div>${ic('tasks',28)}<div style="height:57px"></div>${ic('contacts',24,26)}<div style="height:58px"></div>${ic('maps',26,26)}<div style="height:53px"></div><div style="width:30px;height:1px;background:#dadce0;margin-right:2px"></div><div style="height:55px"></div>${ic('plusThin',22,22,'#000')}<div style="height:236px"></div><div style="margin-right:4px">${ic('right',20)}</div>`);

def('docs-workspace',`<style>:host{display:flex;height:810px}.l{width:1836px;flex:none}.b{display:flex;position:relative;height:730px;background:#f8f9fb;overflow:hidden}.sh{position:absolute;left:0;right:0;top:0;height:9px;background:linear-gradient(rgba(60,64,67,.13),transparent)}</style>
<div class="l"><format-toolbar></format-toolbar><top-ruler></top-ruler><div class="b"><side-ruler></side-ruler><outline-panel></outline-panel><doc-page></doc-page><page-margin></page-margin><div class="sh"></div></div></div><side-panel></side-panel>`);

const two=(a,wa,b,wb,al,cb='#fff',up=3)=>`<div style="display:flex;flex-direction:column;align-items:${al};width:100%;line-height:23.500px;margin-bottom:${up}px">${tx(a,wa)}${tx(b,wb,'color:'+cb)}</div>`;
def('task-bar',`<style>:host{height:72px;background:#202020;border-top:2px solid #414344;display:flex;align-items:center;color:#fff;font:18px "Open Sans",sans-serif;padding-bottom:1px}
.br{display:flex;flex-direction:column;align-items:center;width:59px;height:60px;background:#2e2e2e;border:1px solid #3a3a3a;border-radius:6px;padding-top:11px;gap:6px}.br div{width:24px;height:5px;border-radius:3px;background:#0a93ff;flex:none}
.pp{display:flex;flex-direction:column;align-items:center;gap:6px;padding-top:11px;width:35px}.pp div{width:9px;height:5px;border-radius:3px;background:#999}</style>
${flow([[29,34,ic('moon',34,34),'margin-bottom:4px'],[76,127,two('20°C',38,'Prac. despejado',127,'flex-start','#c8c8c8')],[555,35,ic('win',35)],
[611,173,ic('search',22,22)+tx('Búsqueda',80,'margin-left:7px'),'height:48px;border-radius:24px;background:#2d2d2d;border-top:1px solid #3a3a3a;padding-left:32px'],
[803,36,ic('tview',36,34)],[870,34,ic('chat',34,35)],[935,36,ic('dropbox',36)],[1001,35,ic('store',35,36)],[1067,36,ic('mail',36,35)],[1133,36,ic('files',36,34)],[1199,36,ic('code',36)],
[1254,59,`<div class="br">${ic('brave2',32,36)}<div></div></div>`],[1331,36,`<div class="pp">${ic('ppt',36,36)}<div></div></div>`],mid(1584,'chevU',20,14),[1616,38,two('ENG',35,'US',22,'center','#fff',1)],mid(1692,'wifi',25,23),mid(1727.500,'vol',26,24),mid(1764,'batt',25,25),[1801,90,two('0:33',33,'20/12/2022',90,'flex-end')]])}`);

def('desktop-screen',`<style>:host{width:1920px;height:1080px;background:#fff;overflow:hidden}</style><browser-tabs></browser-tabs><address-bar></address-bar><docs-header></docs-header><docs-workspace></docs-workspace><task-bar></task-bar>`);

/* Single-line text that spreads its letters to a given width. */
customElements.define('ui-text',class extends HTMLElement{
  constructor(){super();this.attachShadow({mode:'open'}).innerHTML='<style>:host{display:block;flex:none;white-space:nowrap}span{display:inline-block}</style><span><slot></slot></span>'}
  connectedCallback(){const w=+this.getAttribute('w'),s=this.shadowRoot.querySelector('span'),n=this.textContent.length;
   const nat=s.getBoundingClientRect().width;if(nat&&n>1)this.style.letterSpacing=((w-nat)/(n-1)).toFixed(3)+'px';this.style.width=w+'px'}
});
</script>
</body>
</html>
